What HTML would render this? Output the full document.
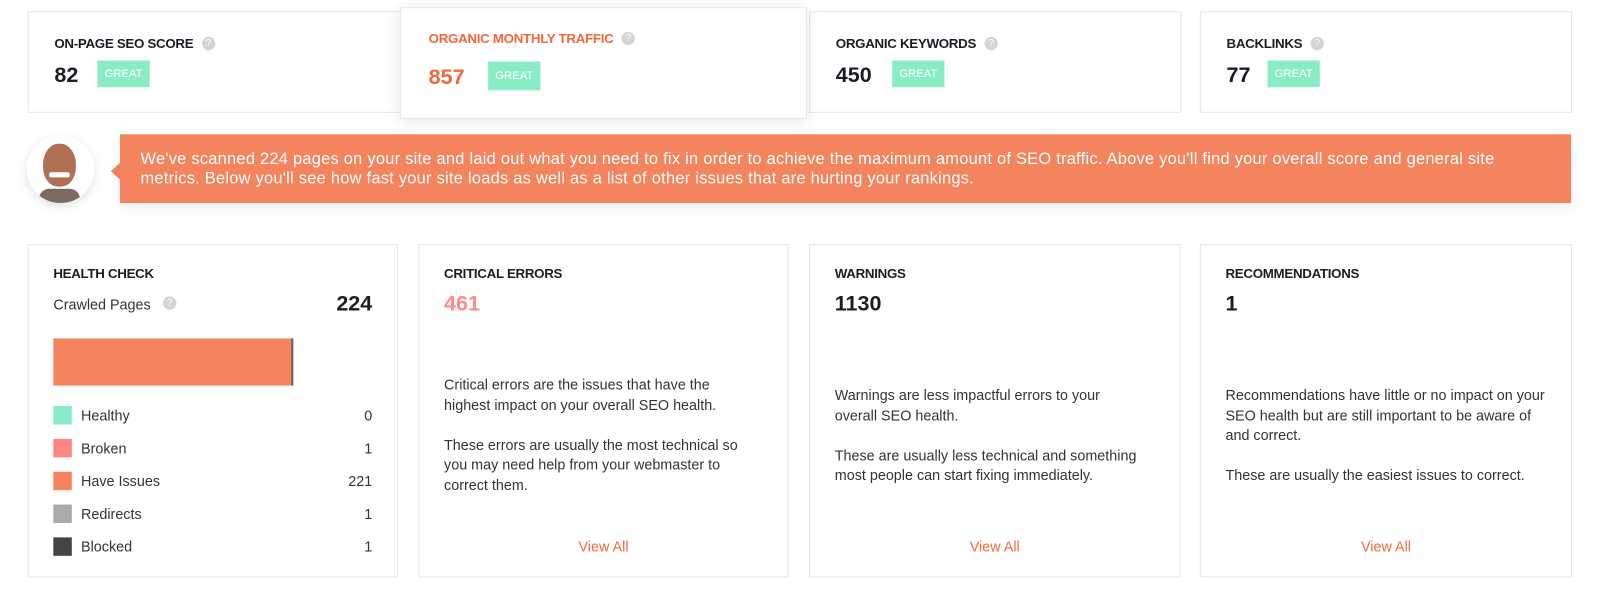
<!DOCTYPE html>
<html><head><style>
body{margin:0;width:1608px;height:594px;background:#fff;font-family:"Liberation Sans",sans-serif;position:relative;overflow:hidden;color:#222}
#w{position:absolute;left:0;top:0;width:1568px;height:580px;transform:scale(1.0255);transform-origin:0 0}
.c{position:absolute;background:#fff;border:1px solid #e3e5ea;box-sizing:border-box}
.t{position:absolute;font-weight:bold;font-size:13px;letter-spacing:-0.3px;color:#1c1c24}
.q{display:inline-block;width:13px;height:13px;border-radius:50%;background:#d3d4d8;color:#fff;font-size:10px;text-align:center;line-height:13px;vertical-align:2px;margin-left:8px;font-weight:normal}
.n{position:absolute;font-weight:bold;font-size:21px;color:#1c1c24}
.g{position:absolute;background:#88edc4;color:#fff;font-size:11px;width:51px;height:28px;line-height:28px;text-align:center}
.p{position:absolute;font-size:14px;line-height:19.5px;color:#333;width:300px}
.v{position:absolute;font-size:14px;color:#f26a3d;width:100%;text-align:center;left:0;top:286px}
.lg{position:absolute;left:24px;width:311px;font-size:14px;color:#333;height:18px;line-height:18px}
.lg i{display:inline-block;width:18px;height:18px;vertical-align:top;margin-right:9px}
.lg b{position:absolute;right:0;font-weight:normal}
</style></head><body><div id="w">
<div class="c" style="left:27px;top:11px;width:371px;height:99px">
<div class="t" style="left:25px;top:23px">ON-PAGE SEO SCORE<span class="q">?</span></div>
<div class="n" style="left:25px;top:50px">82</div><div class="g" style="left:67px;top:47px;height:26px;line-height:26px">GREAT</div></div>
<div class="c" style="left:1170px;top:11px;width:363px;height:99px">
<div class="t" style="left:25px;top:23px">BACKLINKS<span class="q">?</span></div>
<div class="n" style="left:25px;top:50px">77</div><div class="g" style="left:65px;top:47px;height:26px;line-height:26px">GREAT</div></div>
<div class="c" style="left:789px;top:11px;width:363px;height:99px">
<div class="t" style="left:25px;top:23px">ORGANIC KEYWORDS<span class="q">?</span></div>
<div class="n" style="left:25px;top:50px">450</div><div class="g" style="left:80px;top:47px;height:26px;line-height:26px">GREAT</div></div>
<div class="c" style="left:390px;top:7px;width:397px;height:109px;box-shadow:0 2px 14px rgba(0,0,0,.1);border-color:#e8e8ec">
<div class="t" style="left:27px;top:22px;color:#f0683b">ORGANIC MONTHLY TRAFFIC<span class="q">?</span></div>
<div class="n" style="left:27px;top:56px;color:#f0683b">857</div><div class="g" style="left:85px;top:52px">GREAT</div></div>

<div style="position:absolute;left:26px;top:132px;width:66px;height:66px;border-radius:50%;background:#fff;box-shadow:0 3px 10px rgba(0,0,0,.12);overflow:hidden">
<div style="position:absolute;left:16px;top:8px;width:32px;height:42px;border-radius:48% 48% 45% 45%;background:#b07055"></div>
<div style="position:absolute;left:22px;top:36px;width:20px;height:5px;background:#fff;border-radius:2px"></div>
<div style="position:absolute;left:12px;top:52px;width:40px;height:16px;background:#7a6a60;border-radius:10px 10px 0 0"></div></div>
<div style="position:absolute;left:108px;top:158px;width:0;height:0;border-top:9px solid transparent;border-bottom:9px solid transparent;border-right:10px solid #f3845e"></div>
<div style="position:absolute;left:117px;top:131px;width:1415px;height:67px;background:#f3845e;box-shadow:0 6px 14px rgba(0,0,0,.07);color:#fff;font-size:16px;line-height:19px;padding:15px 30px 0 20px;box-sizing:border-box;letter-spacing:0.25px">We've scanned 224 pages on your site and laid out what you need to fix in order to achieve the maximum amount of SEO traffic. Above you'll find your overall score and general site metrics. Below you'll see how fast your site loads as well as a list of other issues that are hurting your rankings.</div>

<div class="c" style="left:27px;top:238px;width:361px;height:325px">
<div class="t" style="left:24px;top:20px">HEALTH CHECK</div>
<div style="position:absolute;left:24px;top:50px;font-size:14px;color:#333">Crawled Pages<span class="q" style="vertical-align:4px;margin-left:12px">?</span></div>
<div class="n" style="right:24px;top:46px">224</div>
<div style="position:absolute;left:24px;top:91px;width:232px;height:46px;background:#f3845e;border-right:2px solid #666"></div>
<div class="lg" style="top:157px"><i style="background:#88edc4"></i>Healthy<b>0</b></div>
<div class="lg" style="top:189px"><i style="background:#ff8585"></i>Broken<b>1</b></div>
<div class="lg" style="top:221px"><i style="background:#f3845e"></i>Have Issues<b>221</b></div>
<div class="lg" style="top:253px"><i style="background:#aaa"></i>Redirects<b>1</b></div>
<div class="lg" style="top:285px"><i style="background:#444"></i>Blocked<b>1</b></div>
</div>
<div class="c" style="left:408px;top:238px;width:361px;height:325px">
<div class="t" style="left:24px;top:20px">CRITICAL ERRORS</div>
<div class="n" style="left:24px;top:46px;color:#ff8a8a">461</div>
<div class="p" style="left:24px;top:127px">Critical errors are the issues that have the highest impact on your overall SEO health.<br><br>These errors are usually the most technical so you may need help from your webmaster to correct them.</div>
<div class="v">View All</div></div>
<div class="c" style="left:789px;top:238px;width:362px;height:325px">
<div class="t" style="left:24px;top:20px">WARNINGS</div>
<div class="n" style="left:24px;top:46px">1130</div>
<div class="p" style="left:24px;top:137px">Warnings are less impactful errors to your overall SEO health.<br><br>These are usually less technical and something most people can start fixing immediately.</div>
<div class="v">View All</div></div>
<div class="c" style="left:1170px;top:238px;width:363px;height:325px">
<div class="t" style="left:24px;top:20px">RECOMMENDATIONS</div>
<div class="n" style="left:24px;top:46px">1</div>
<div class="p" style="left:24px;top:137px;width:320px">Recommendations have little or no impact on your SEO health but are still important to be aware of and correct.<br><br>These are usually the easiest issues to correct.</div>
<div class="v">View All</div></div>
</div></body></html>
